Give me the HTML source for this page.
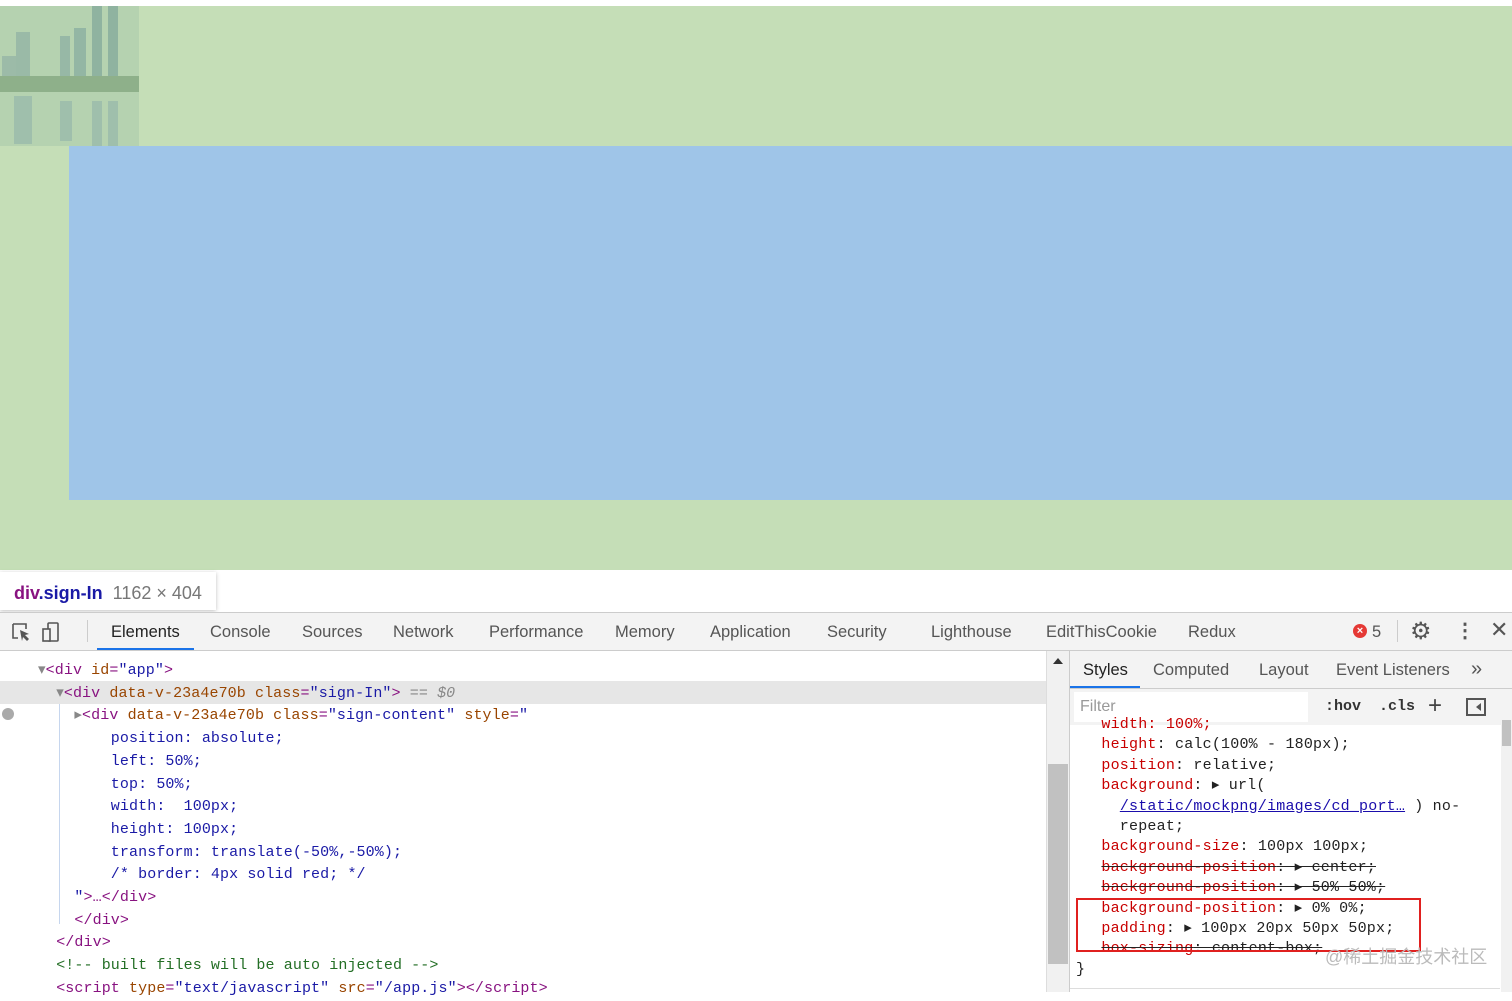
<!DOCTYPE html>
<html><head><meta charset="utf-8"><style>
*{margin:0;padding:0;box-sizing:border-box}
body{width:1512px;height:992px;overflow:hidden;background:#fff;position:relative;font-family:"Liberation Sans",sans-serif}
.a{position:absolute;white-space:pre}
.m{font-family:"Liberation Mono",monospace;font-size:15px}
.tab{position:absolute;top:623px;font-size:16.5px;color:#555}
.t{color:#881280}.at{color:#994500}.v{color:#1a1aa6}.p{color:#c80000}.cm{color:#236e25}.g{color:#888}
</style></head><body>
<div class="a" style="left:0;top:6px;width:1512px;height:564px;background:#c5deb7"></div>
<div class="a" style="left:0;top:0;width:1512px;height:6px;background:#fff"></div>
<svg class="a" style="left:0;top:6px" width="139" height="140">
<rect width="139" height="140" fill="#b5d2b0"/>
<rect x="92" y="0" width="10" height="70" fill="#8fb3a0"/><rect x="108" y="0" width="10" height="70" fill="#8fb3a0"/>
<rect x="74" y="22" width="12" height="50" fill="#93b6a4"/><rect x="60" y="30" width="10" height="42" fill="#97b8a6"/>
<rect x="16" y="26" width="14" height="46" fill="#9abaa7"/><rect x="2" y="50" width="14" height="22" fill="#9cbba8"/>
<rect x="0" y="70" width="139" height="16" fill="#8eb08a"/>
<rect x="14" y="90" width="18" height="48" fill="#9fbfac"/><rect x="60" y="95" width="12" height="40" fill="#9fbfac"/><rect x="92" y="95" width="10" height="45" fill="#9fbfac"/><rect x="108" y="95" width="10" height="45" fill="#9fbfac"/>
</svg>
<div class="a" style="left:69px;top:146px;width:1443px;height:354px;background:#9fc5e8"></div>
<div class="a" style="left:0;top:570px;width:1512px;height:42px;background:#fff"></div>
<div class="a" style="left:0;top:572px;width:216px;height:38px;background:#fff;box-shadow:0 1px 4px rgba(0,0,0,.25)"></div>
<div class="a" style="left:14px;top:583px;font-size:18px"><span style="color:#881280;font-weight:bold">div</span><span style="color:#1a1aa6;font-weight:bold">.sign-In</span><span style="color:#777">  1162 × 404</span></div>
<div class="a" style="left:0;top:612px;width:1512px;height:39px;background:#f3f3f3;border-top:1px solid #ccc;border-bottom:1px solid #ccc"></div>
<svg class="a" style="left:10px;top:620px" width="64" height="24"><path d="M3 4h13v5M3 4v14h5" stroke="#555" fill="none" stroke-width="1.6"/><path d="M10 10l9 4-4 1 4 4-2 2-4-4-1 4z" fill="#555"/><rect x="38" y="3" width="10" height="18" rx="1" stroke="#555" fill="none" stroke-width="1.6"/><rect x="33" y="9" width="7" height="12" stroke="#555" fill="#f3f3f3" stroke-width="1.6"/></svg>
<div class="a" style="left:87px;top:620px;width:1px;height:22px;background:#ccc"></div>
<div class="tab" style="left:111px;color:#222">Elements</div>
<div class="a" style="left:97px;top:648px;width:97px;height:2px;background:#1a73e8"></div>
<div class="tab" style="left:210px">Console</div><div class="tab" style="left:302px">Sources</div><div class="tab" style="left:393px">Network</div><div class="tab" style="left:489px">Performance</div><div class="tab" style="left:615px">Memory</div><div class="tab" style="left:710px">Application</div><div class="tab" style="left:827px">Security</div><div class="tab" style="left:931px">Lighthouse</div><div class="tab" style="left:1046px">EditThisCookie</div><div class="tab" style="left:1188px">Redux</div>
<div class="a" style="left:1353px;top:624px;width:14px;height:14px;border-radius:7px;background:#e53935;color:#fff;font-size:11px;text-align:center;line-height:14px;font-weight:bold">×</div>
<div class="tab" style="left:1372px">5</div>
<div class="a" style="left:1397px;top:620px;width:1px;height:22px;background:#ccc"></div>
<div class="a" style="left:1410px;top:617px;font-size:24px;color:#555">⚙</div>
<div class="a" style="left:1455px;top:618px;font-size:20px;color:#555;font-weight:bold">⋮</div>
<div class="a" style="left:1490px;top:617px;font-size:22px;color:#555">✕</div>
<div class="a" style="left:0;top:681px;width:1046px;height:23px;background:#e6e6e6"></div>
<div class="a" style="left:2px;top:708px;width:12px;height:12px;border-radius:6px;background:#aaa"></div>
<div class="a" style="left:59px;top:704px;width:1px;height:220px;background:#c6d6ee"></div>
<div class="a m" style="left:38px;top:660px;line-height:22.7px;letter-spacing:0.1px"><span class="g">▾</span><span class="t">&lt;div </span><span class="at">id</span><span class="t">=</span><span class="v">"app"</span><span class="t">&gt;</span>
  <span class="g">▾</span><span class="t">&lt;div </span><span class="at">data-v-23a4e70b class</span><span class="t">=</span><span class="v">"sign-In"</span><span class="t">&gt;</span> <span class="g">== <i>$0</i></span>
    <span class="g">▸</span><span class="t">&lt;div </span><span class="at">data-v-23a4e70b class</span><span class="t">=</span><span class="v">"sign-content"</span> <span class="at">style</span><span class="t">=</span><span class="v">"</span>
<span class="v">        position: absolute;
        left: 50%;
        top: 50%;
        width:  100px;
        height: 100px;
        transform: translate(-50%,-50%);
        /* border: 4px solid red; */</span>
    <span class="v">"</span><span class="t">&gt;…&lt;/div&gt;</span>
    <span class="t">&lt;/div&gt;</span>
  <span class="t">&lt;/div&gt;</span>
  <span class="cm">&lt;!-- built files will be auto injected --&gt;</span>
  <span class="t">&lt;script </span><span class="at">type</span><span class="t">=</span><span class="v">"text/javascript"</span> <span class="at">src</span><span class="t">=</span><span class="v">"/app.js"</span><span class="t">&gt;&lt;/script&gt;</span></div>
<div class="a" style="left:1046px;top:651px;width:24px;height:341px;background:#f1f1f1;border-left:1px solid #ddd;border-right:1px solid #ccc"></div>
<div class="a" style="left:1053px;top:658px;width:0;height:0;border-left:5px solid transparent;border-right:5px solid transparent;border-bottom:6px solid #333"></div>
<div class="a" style="left:1048px;top:764px;width:20px;height:200px;background:#c1c1c1"></div>
<div class="a" style="left:1070px;top:651px;width:442px;height:38px;background:#f3f3f3;border-bottom:1px solid #ccc"></div>
<div class="tab" style="top:661px;left:1083px;color:#222">Styles</div>
<div class="a" style="left:1070px;top:686px;width:70px;height:2px;background:#1a73e8"></div>
<div class="tab" style="top:661px;left:1153px">Computed</div><div class="tab" style="top:661px;left:1259px">Layout</div><div class="tab" style="top:661px;left:1336px">Event Listeners</div><div class="tab" style="top:658px;left:1471px;font-size:20px">»</div>
<div class="a" style="left:1070px;top:689px;width:442px;height:36px;background:#f3f3f3"></div>
<div class="a" style="left:1074px;top:692px;width:234px;height:30px;background:#fff"></div>
<div class="a" style="left:1080px;top:698px;font-size:16px;color:#999">Filter</div>
<div class="a m" style="left:1325px;top:698px;font-weight:bold;color:#333">:hov  .cls</div>
<div class="a" style="left:1428px;top:692px;font-size:24px;color:#444">+</div>
<div class="a" style="left:1466px;top:698px;width:20px;height:18px;border:2px solid #555"></div>
<div class="a" style="left:1476px;top:703px;width:0;height:0;border-top:4px solid transparent;border-bottom:4px solid transparent;border-right:5px solid #555"></div>
<div class="a" style="left:1501px;top:725px;width:11px;height:267px;background:#f1f1f1"></div>
<div class="a" style="left:1502px;top:720px;width:9px;height:26px;background:#c1c1c1"></div>
<div class="a" style="left:1070px;top:988px;width:430px;height:1px;background:#ddd"></div>
<div class="a m" style="left:1083px;top:715px;line-height:20.4px;color:#222;letter-spacing:0.2px"><span style="color:#c80000">  width: 100%;</span>
  <span class="p">height</span>: calc(100% - 180px);
  <span class="p">position</span>: relative;
  <span class="p">background</span>: ▸ url(
    <span style="color:#1a0dab;text-decoration:underline">/static/mockpng/images/cd_port…</span> ) no-
    repeat;
  <span class="p">background-size</span>: 100px 100px;
  <s><span class="p">background-position</span>: ▸ center;</s>
  <s><span class="p">background-position</span>: ▸ 50% 50%;</s>
  <span class="p">background-position</span>: ▸ 0% 0%;
  <span class="p">padding</span>: ▸ 100px 20px 50px 50px;
  <s><span class="p">box-sizing</span>: content-box;</s>
<span style="margin-left:-7px">}</span></div>
<div class="a" style="left:1076px;top:898px;width:345px;height:54px;border:2px solid #e0201f"></div>
<div class="a" style="left:1325px;top:943px;font-size:18px;color:#bbb;font-family:'Liberation Sans','Noto Sans CJK SC',sans-serif">@稀土掘金技术社区</div>
</body></html>
